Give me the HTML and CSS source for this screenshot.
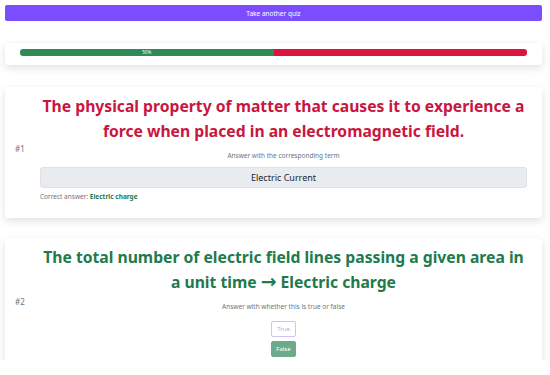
FILE: index.html
```html
<!DOCTYPE html>
<html>
<head>
<meta charset="utf-8">
<link rel="stylesheet" href="styles.css">
</head>
<body>
<div class="viewport">
  <div class="page">
    <button class="btn-quiz">Take another quiz</button>
    <div class="card progress-card">
      <div class="progress">
        <div class="bar ok" style="width:50%">50%</div>
        <div class="bar bad"></div>
      </div>
    </div>
    <div class="card q-card">
      <div class="num">#1</div>
      <div class="q-body">
        <h2 class="q-title wrong">The physical property of matter that causes it to experience a force when placed in an electromagnetic field.</h2>
        <p class="hint">Answer with the corresponding term</p>
        <div class="answer-box">Electric Current</div>
        <p class="correct">Correct answer: <b>Electric charge</b></p>
      </div>
    </div>
    <div class="card q-card">
      <div class="num">#2</div>
      <div class="q-body">
        <h2 class="q-title right">The total number of electric field lines passing a given area in a unit time <span class="arrow">→</span> Electric charge</h2>
        <p class="hint">Answer with whether this is true or false</p>
        <div class="choices">
          <button class="choice outline">True</button>
          <button class="choice picked">False</button>
        </div>
      </div>
    </div>
  </div>
</div>
</body>
</html>
```
FILE: styles.css
```css
html, body {
  margin: 0;
  padding: 0;
  background: #fff;
}
body {
  font-family: "Noto Sans", "Open Sans", sans-serif;
  color: #212529;
}
.viewport {
  height: 360px;
  overflow: hidden;
}
.page {
  width: 537px;
  padding: 5px 0 0 5px;
  display: flex;
  flex-direction: column;
}
.btn-quiz {
  height: 16px;
  border: none;
  border-radius: 2px;
  background: #7c4dff;
  color: #fff;
  font-family: inherit;
  font-size: 6.5px;
  padding: 0;
  margin: 0 0 22px;
}
.card {
  background: #fff;
  border-radius: 3px;
  box-shadow: 0 3px 8px rgba(0, 0, 0, 0.12);
}
.progress-card {
  padding: 6px 15px 9px;
  margin-bottom: 22px;
}
.progress {
  display: flex;
  height: 7px;
  border-radius: 3px;
  overflow: hidden;
}
.bar {
  font-size: 4.5px;
  line-height: 7px;
  color: #fff;
  text-align: center;
}
.bar.ok { background: #2e8b57; }
.bar.bad { background: #dc143c; flex: 1; }
.q-card {
  display: flex;
  align-items: center;
  padding: 7px 15px 16px 10px;
  margin-bottom: 20px;
}
.num {
  width: 25px;
  flex: none;
  font-size: 8px;
  color: #6c757d;
}
.q-body {
  flex: 1;
  display: flex;
  flex-direction: column;
  align-items: center;
}
.q-title {
  margin: 0 -1px;
  font-size: 15.7px;
  line-height: 25px;
  font-weight: 700;
  text-align: center;
}
.arrow {
  font-family: "DejaVu Sans", sans-serif;
  font-size: 1.2em;
  line-height: 0;
}
.q-title.wrong { color: #c8163f; }
.q-title.right { color: #1f7a4d; }
.hint {
  margin: 7px 0 6px;
  font-size: 6.5px;
  line-height: 10px;
  color: #6c757d;
}
.answer-box {
  align-self: stretch;
  height: 21px;
  box-sizing: border-box;
  background: #e9ecef;
  border: 1px solid #dee2e6;
  border-radius: 3px;
  font-size: 9px;
  line-height: 19px;
  text-align: center;
}
.correct {
  align-self: flex-start;
  margin: 4px 0 0;
  font-size: 6.5px;
  line-height: 10px;
  color: #6c757d;
}
.correct b { color: #1f7a4d; }
.choices {
  display: flex;
  flex-direction: column;
  align-items: center;
  gap: 4px;
  margin-top: 3px;
}
.choice {
  height: 16px;
  padding: 0 4px;
  border-radius: 2px;
  font-family: inherit;
  font-size: 6px;
}
.choice.outline {
  background: #fff;
  border: 1px solid #cfc2f4;
  color: #b8a6ec;
  padding: 0 5px;
}
.choice.picked {
  background: #6bab8b;
  border: 1px solid #6bab8b;
  color: #fff;
}
```
